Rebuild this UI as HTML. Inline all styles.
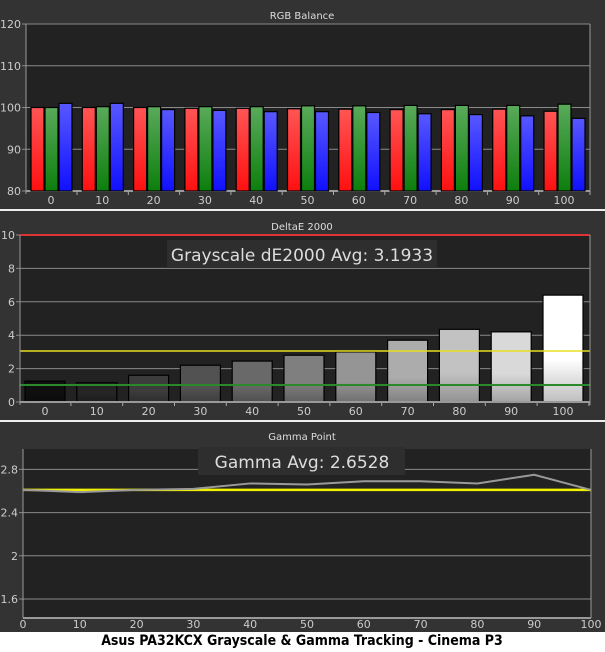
<!DOCTYPE html>
<html><head><meta charset="utf-8"><style>
html,body{margin:0;padding:0;background:#fff}
svg{display:block}
text{font-family:"DejaVu Sans","Liberation Sans",sans-serif}
</style></head><body>
<svg id="s" width="605" height="652" xmlns="http://www.w3.org/2000/svg">
<defs>
<linearGradient id="gr" x1="0" y1="0" x2="0" y2="1"><stop offset="0" stop-color="#ff5555"/><stop offset="1" stop-color="#ff1010"/></linearGradient>
<linearGradient id="gg" x1="0" y1="0" x2="0" y2="1"><stop offset="0" stop-color="#5aaa5a"/><stop offset="1" stop-color="#0c7f0c"/></linearGradient>
<linearGradient id="gb" x1="0" y1="0" x2="0" y2="1"><stop offset="0" stop-color="#5858ff"/><stop offset="1" stop-color="#1010ff"/></linearGradient>
</defs>
<rect x="0" y="0" width="605" height="632" fill="#333"/>
<rect x="0" y="209" width="605" height="2" fill="#eee"/>
<rect x="0" y="420" width="605" height="2" fill="#eee"/>
<rect x="0" y="632" width="605" height="20" fill="#fff"/>
<text x="302" y="640" dy="5" text-anchor="middle" font-family="DejaVu Sans" font-weight="bold" font-size="14" fill="#000" style="font-family:'DejaVu Sans Condensed','DejaVu Sans',sans-serif">Asus PA32KCX Grayscale &amp; Gamma Tracking - Cinema P3</text>
<g id="g"></g>
</svg>
<script>
var g=document.getElementById('g'),h='';
function R(x,y,w,hh,f,st){h+='<rect x="'+x+'" y="'+y+'" width="'+w+'" height="'+hh+'" fill="'+f+'"'+(st?' stroke="#000" stroke-width="1.2"':'')+'/>';}
function L(x1,y1,x2,y2,c,w){h+='<line x1="'+x1+'" y1="'+y1+'" x2="'+x2+'" y2="'+y2+'" stroke="'+c+'" stroke-width="'+(w||1)+'"/>';}
function T(x,y,t,s,c,a){h+='<text x="'+x+'" y="'+y+'" font-size="'+s+'" fill="'+c+'" text-anchor="'+(a||'middle')+'">'+t+'</text>';}
// Panel 1
T(302,19,'RGB Balance',10,'#ddd');
R(26,24,564,167,'#222');
var yv=function(v){return 191-(v-80)*4.175};
[120,110,100,90,80].forEach(function(v){var y=yv(v);L(22,y,590,y,'#8a8a8a');T(21,y+4,v,11,'#ccc','end');});
L(26,24,26,194,'#999');L(590,24,590,194,'#999');L(26,191,590,191,'#999',2);
var Rv=[100,100,100,99.8,99.8,99.7,99.6,99.5,99.5,99.6,99.1],Gv=[100,100.2,100.2,100.2,100.2,100.4,100.4,100.5,100.5,100.5,100.8],Bv=[101,101,99.5,99.3,99,99,98.8,98.5,98.3,98,97.4];
for(var i=0;i<11;i++){var x=31+i*51.3;
R(x,yv(Rv[i]),13,191-yv(Rv[i]),'url(#gr)',1);R(x+14,yv(Gv[i]),13,191-yv(Gv[i]),'url(#gg)',1);R(x+28,yv(Bv[i]),13,191-yv(Bv[i]),'url(#gb)',1);
T(x+20,204,i*10,11,'#ccc');if(i<11)L(x+46,191,x+46,195,'#aaa');}
// Panel 2
T(302,230,'DeltaE 2000',10,'#ddd');
R(20,235,570,167,'#222');
var yd=function(v){return 402-v*16.7};
[10,8,6,4,2,0].forEach(function(v){var y=yd(v);L(16,y,590,y,'#8a8a8a');T(15,y+4,v,11,'#ccc','end');});
L(20,235,590,235,'#d33',2);
var D=[1.25,1.15,1.6,2.2,2.45,2.8,3.0,3.7,4.35,4.2,6.4];
for(var i=0;i<11;i++){var x=25+i*51.8,c=Math.round(15+i*22.4);if(i==10)c=255;var cs='rgb('+c+','+c+','+c+')';
h+='<linearGradient id="d'+i+'" x1="0" y1="0" x2="0" y2="1"><stop offset="0" stop-color="'+cs+'"/><stop offset="0.6" stop-color="'+cs+'"/><stop offset="1" stop-color="rgb('+Math.round(c*0.75)+','+Math.round(c*0.75)+','+Math.round(c*0.75)+')"/></linearGradient>';
R(x,yd(D[i]),40,402-yd(D[i]),'url(#d'+i+')',1);T(x+20,415,i*10,11,'#ccc');L(x+45.9,402,x+45.9,406,'#aaa');}
L(20,351,590,351,'#e8e020',1.5);L(20,385,590,385,'#2a8a2a',2);
L(20,402,590,402,'#999',2);L(20,235,20,405,'#999');L(590,235,590,405,'#999');
R(167,240,270,28,'#2e2e2e');T(302,261,'Grayscale dE2000 Avg: 3.1933',17,'#ddd');
// Panel 3
T(302,440,'Gamma Point',10,'#ddd');
R(23,449,568,169,'#222');
var yg=function(v){return 599-(v-1.6)*108};
[[2.8,'2.8'],[2.4,'2.4'],[2,'2'],[1.6,'1.6']].forEach(function(a){var y=yg(a[0]);L(19,y,591,y,'#8a8a8a');T(18,y+4,a[1],11,'#ccc','end');});
L(23,449,23,618,'#999');L(591,449,591,618,'#999');L(23,618,591,618,'#999',2);
var Gm=[2.61,2.59,2.61,2.62,2.67,2.66,2.69,2.69,2.67,2.75,2.61],p='';
for(var i=0;i<11;i++){var x=23+i*56.8;p+=(i?' ':'')+x+','+yg(Gm[i]);T(x,628,i*10,11,'#ccc');}
L(23,yg(2.61),591,yg(2.61),'#f0f000',2.5);
h+='<polyline points="'+p+'" fill="none" stroke="#999" stroke-width="2"/>';
R(198,447,207,28,'#2e2e2e');T(302,468,'Gamma Avg: 2.6528',17,'#ddd');
g.innerHTML=h;
</script>
</body></html>
